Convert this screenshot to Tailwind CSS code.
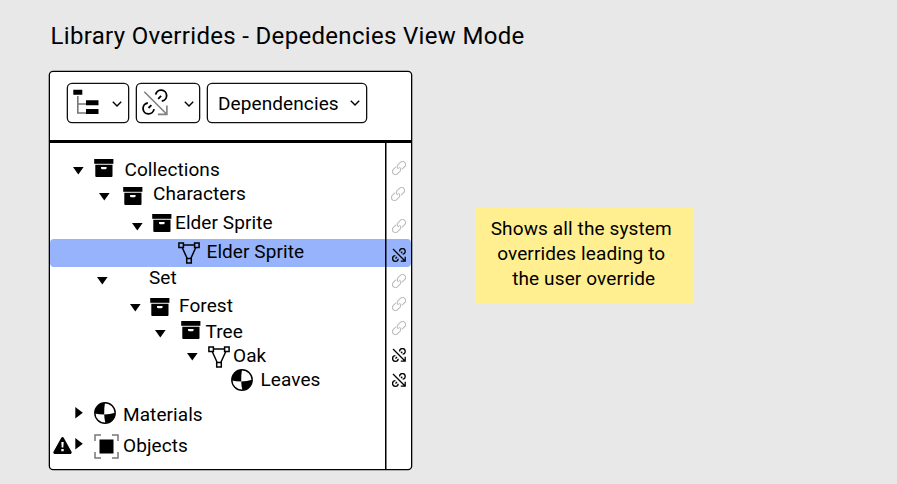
<!DOCTYPE html>
<html lang="en">
<head>
<meta charset="utf-8">
<title>Library Overrides</title>
<script src="https://cdn.jsdelivr.net/npm/@tailwindcss/browser@4"></script>
</head>
<body class="h-[484px] w-[897px] overflow-hidden bg-[#e8e8e8] font-[Roboto,sans-serif] text-black">
<svg class="hidden">
  <symbol id="down" viewBox="0 0 11 8"><path d="M0 0h10.600L5.300 7.400z"/></symbol>
  <symbol id="right" viewBox="0 0 8 12"><path d="M.3 0v11.400L7.800 5.700z"/></symbol>
  <symbol id="box" viewBox="0 0 20 18"><path d="M.2 0h19.2v4.8H.2z"/><path fill-rule="evenodd" d="M1.300 5.700h17.200v11.300a1 1 0 0 1-1 1H2.300a1 1 0 0 1-1-1zM7 8v1a1.300 1.300 0 0 0 1.300 1.300h3a1.300 1.300 0 0 0 1.300-1.300v-1z"/></symbol>
  <symbol id="mesh" viewBox="0 0 22 22"><g fill="none" stroke="#000" stroke-width="1.5"><path d="M5.500 3h11M4.200 5.500l5 11M17.800 5.500l-5 11"/><path d="M.9.9h4.500v4.500H.9zM16.600.9h4.500v4.500h-4.500zM8.700 16.500h4.600v4.600H8.700z"/></g></symbol>
  <symbol id="ball" viewBox="0 0 22 22"><circle cx="11" cy="11" r="10.200" fill="#fff" stroke="#000" stroke-width="1.400"/><path d="M11 .8Q10 6 10.200 12.500 5 12.500.9 11.500A10.200 10.200 0 0 1 11 .8zM10.200 12.500Q16 12.500 21.100 10.800A10.200 10.200 0 0 1 11.500 21.200Q10.300 17 10.200 12.500z"/></symbol>
  <symbol id="link" viewBox="0 0 14 14"><g fill="none" stroke="#bcbcbc" stroke-width="1.100" stroke-linecap="round" transform="rotate(-45 7 7)"><path d="M5.300 4H2a3 3 0 0 0 0 6h3.300a3 3 0 0 0 2.700-3M8.700 10H12a3 3 0 0 0 0-6H8.700A3 3 0 0 0 6 7"/></g></symbol>
  <symbol id="override" viewBox="0 0 14 14"><g fill="none" stroke="#000" stroke-width="1.300"><path d="M1 1l12 12M13.200 8.800v4.400H8.800"/><path d="M7.600 3.400A2.800 2.800 0 1 1 10.600 6.200M9 5l1.300-1.300M3.400 7.700A2.800 2.800 0 1 0 6.200 10.700M3.500 10.500L5 9"/></g></symbol>
  <symbol id="chevron" viewBox="0 0 10 6"><path d="M.8.8L5 5 9.200.8" fill="none" stroke="#000" stroke-width="1.400"/></symbol>
</svg>

<h1 class="ml-[50.500px] pt-[20px] text-[24px] leading-[32px] tracking-[0.32px] whitespace-nowrap">Library Overrides - Depedencies View Mode</h1>

<main class="mt-[20px] ml-[50px] flex items-start">
  <section class="h-[397px] w-[361px] rounded-[3px] bg-white shadow-[0_0_0_1.3px_#000]">
    <header class="flex h-[71px] gap-[9px] border-b-[3px] border-black pt-[12px] pl-[18px]">
      <button class="flex h-[38px] w-[60px] items-start rounded-[4px] shadow-[0_0_0_1.3px_#111]">
        <svg class="mt-[5px] ml-[5px] h-[26px] w-[26px]" viewBox="0 0 26 26"><path d="M4.800 7v17H13M4.800 15H13" fill="none" stroke="#777" stroke-width="1.600"/><path d="M.3.800h9v5h-9zM13 11.200h12.500v5H13zM13 20h12.500v5H13z"/></svg>
        <svg class="mt-[17px] ml-[13px] h-[6px] w-[10px]"><use href="#chevron"/></svg>
      </button>
      <button class="flex h-[38px] w-[62px] items-start rounded-[4px] shadow-[0_0_0_1.3px_#111]">
        <svg class="mt-[5px] ml-[5px] h-[27px] w-[26px]" viewBox="0 0 26 27"><g fill="none"><path d="M2.300 2.700L24.500 25M24.900 16.500v8.900h-9" stroke="#808080" stroke-width="1.600"/><path d="M13.700 5.600A5.500 5.500 0 1 1 19.800 12M16.200 9.800l2.900-2.900M5.800 14A5.500 5.500 0 1 0 12 20.200M6.500 19l2.900-2.900" stroke="#000" stroke-width="1.800"/></g></svg>
        <svg class="mt-[17px] ml-[16px] h-[6px] w-[10px]"><use href="#chevron"/></svg>
      </button>
      <button class="flex h-[38px] w-[158px] items-start rounded-[4px] pl-[10px] shadow-[0_0_0_1.3px_#111]">
        <span class="mt-[8px] w-[132px] text-left text-[19px] leading-[24px] tracking-[0.1px]">Dependencies</span>
        <svg class="mt-[16px] h-[6px] w-[10px]"><use href="#chevron"/></svg>
      </button>
    </header>

    <div class="h-[326px] bg-[linear-gradient(#000,#000)] bg-[length:1.5px_100%] bg-[position:335px_0] bg-no-repeat pt-[14px] text-[19px] leading-[24px] tracking-[0.08px] whitespace-nowrap">
      <div class="flex h-[24px] items-start">
        <div class="flex w-[342px] items-start pl-[23px]">
          <svg class="mt-[10px] h-[8px] w-[11px]"><use href="#down"/></svg>
          <svg class="mt-[2px] ml-[10px] h-[18px] w-[20px]"><use href="#box"/></svg>
          <span class="mt-[1px] ml-[10.500px]">Collections</span>
        </div>
        <svg class="mt-[4px] h-[14px] w-[14px]"><use href="#link"/></svg>
      </div>
      <div class="flex h-[29px] items-start">
        <div class="flex w-[341px] items-start pl-[49px]">
          <svg class="mt-[12px] h-[8px] w-[11px]"><use href="#down"/></svg>
          <svg class="mt-[6px] ml-[13px] h-[18px] w-[20px]"><use href="#box"/></svg>
          <span class="mt-[1px] ml-[10px]">Characters</span>
        </div>
        <svg class="mt-[6px] h-[14px] w-[14px]"><use href="#link"/></svg>
      </div>
      <div class="flex h-[29px] items-start">
        <div class="flex w-[342px] items-start pl-[82px]">
          <svg class="mt-[13px] h-[8px] w-[11px]"><use href="#down"/></svg>
          <svg class="mt-[4px] ml-[9px] h-[18px] w-[20px]"><use href="#box"/></svg>
          <span class="mt-[1px] ml-[3px]">Elder Sprite</span>
        </div>
        <svg class="mt-[9px] h-[14px] w-[14px]"><use href="#link"/></svg>
      </div>
      <div class="flex h-[28px] items-start rounded-[4px] bg-[#96b3fb] bg-[linear-gradient(#000,#000)] bg-[length:1.5px_100%] bg-[position:335px_0] bg-no-repeat">
        <div class="flex w-[342px] items-start pl-[128px]">
          <svg class="mt-[3px] h-[22px] w-[22px]"><use href="#mesh"/></svg>
          <span class="mt-[1px] ml-[6.500px]">Elder Sprite</span>
        </div>
        <svg class="mt-[9px] h-[14px] w-[14px]"><use href="#override"/></svg>
      </div>
      <div class="flex h-[26px] items-start">
        <div class="flex w-[342px] items-start pl-[46.500px]">
          <svg class="mt-[10px] h-[8px] w-[11px]"><use href="#down"/></svg>
          <span class="-mt-[1px] ml-[41.500px]">Set</span>
        </div>
        <svg class="mt-[7px] h-[14px] w-[14px]"><use href="#link"/></svg>
      </div>
      <div class="flex h-[26px] items-start">
        <div class="flex w-[342px] items-start pl-[80px]">
          <svg class="mt-[11px] h-[8px] w-[11px]"><use href="#down"/></svg>
          <svg class="mt-[5px] ml-[9px] h-[18px] w-[20px]"><use href="#box"/></svg>
          <span class="mt-[1px] ml-[9px]">Forest</span>
        </div>
        <svg class="mt-[4px] h-[14px] w-[14px]"><use href="#link"/></svg>
      </div>
      <div class="flex h-[24px] items-start">
        <div class="flex w-[342px] items-start pl-[104.500px]">
          <svg class="mt-[11px] h-[8px] w-[11px]"><use href="#down"/></svg>
          <svg class="mt-[2px] ml-[15px] h-[18px] w-[20px]"><use href="#box"/></svg>
          <span class="mt-[1px] ml-[5px]">Tree</span>
        </div>
        <svg class="mt-[2px] h-[14px] w-[14px]"><use href="#link"/></svg>
      </div>
      <div class="flex h-[24px] items-start">
        <div class="flex w-[342px] items-start pl-[137px]">
          <svg class="mt-[10px] h-[8px] w-[11px]"><use href="#down"/></svg>
          <svg class="mt-[3px] ml-[10px] h-[22px] w-[22px]"><use href="#mesh"/></svg>
          <span class="mt-[1px] ml-[3px]">Oak</span>
        </div>
        <svg class="mt-[5px] h-[14px] w-[14px]"><use href="#override"/></svg>
      </div>
      <div class="flex h-[35px] items-start">
        <div class="flex w-[342px] items-start pl-[181px]">
          <svg class="mt-[2px] h-[22px] w-[22px]"><use href="#ball"/></svg>
          <span class="mt-[1px] ml-[7.500px]">Leaves</span>
        </div>
        <svg class="mt-[6px] h-[14px] w-[14px]"><use href="#override"/></svg>
      </div>
      <div class="flex h-[31px] items-start pl-[25px]">
        <svg class="mt-[5px] h-[12px] w-[8px]"><use href="#right"/></svg>
        <svg class="ml-[11px] h-[22px] w-[22px]"><use href="#ball"/></svg>
        <span class="mt-[1px] ml-[7px]">Materials</span>
      </div>
      <div class="flex h-[31px] items-start pl-[3px]">
        <svg class="mt-[4px] h-[17px] w-[19px]" viewBox="0 0 19 17"><path d="M9.500 1.500L17.300 15.500H1.700z" stroke="#000" stroke-width="2.800" stroke-linejoin="round"/><path d="M8.300 5h2.400l-.4 5.500H8.700zM8.300 12h2.400v2.200H8.300z" fill="#fff"/></svg>
        <svg class="mt-[4.500px] ml-[3px] h-[12px] w-[8px]"><use href="#right"/></svg>
        <svg class="mt-[1px] ml-[11px] h-[25px] w-[25px]" viewBox="0 0 25 25"><path d="M7 1H1v6M18 1h6v6M7 24H1v-6M18 24h6v-6" fill="none" stroke="#777" stroke-width="1.500"/><path d="M5.500 5.500h14v14h-14z"/></svg>
        <span class="mt-[1px] ml-[4px]">Objects</span>
      </div>
    </div>
  </section>

  <aside class="mt-[136px] ml-[63.500px] h-[96px] w-[219.500px] bg-[#ffef91] pt-[8px] text-center text-[19px] leading-[25px] tracking-[0.12px] whitespace-nowrap">
    <p class="-ml-[6px]">Shows all the system</p>
    <p class="-ml-[6px]">overrides leading to</p>
    <p class="-ml-[1px]">the user override</p>
  </aside>
</main>
</body>
</html>
